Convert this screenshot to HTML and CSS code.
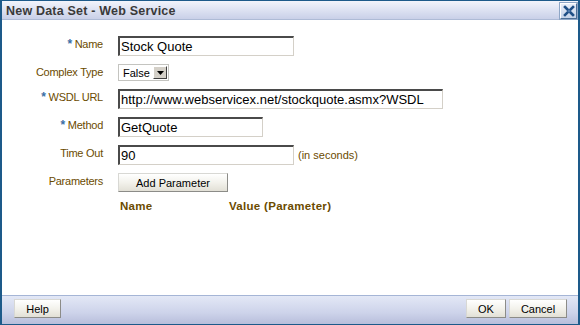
FILE: index.html
```html
<!DOCTYPE html>
<html>
<head>
<meta charset="utf-8">
<title>New Data Set - Web Service</title>
<link rel="stylesheet" href="styles.css">
</head>
<body>
<div class="dialog">
  <div class="titlebar">
    <span class="title">New Data Set - Web Service</span>
    <span class="close">
      <svg width="14" height="14" viewBox="0 0 14 14">
        <path d="M3 3 L11 11 M11 3 L3 11" stroke="#1f4f86" stroke-width="2.6" stroke-linecap="square"/>
        <path d="M7 5.5 L7 8.5 M5.5 7 L8.5 7" stroke="#5f86b8" stroke-width="1"/>
      </svg>
    </span>
  </div>
  <div class="content">
    <div class="form">
      <div class="lbl"><span class="req">*</span> Name</div>
      <div class="field"><div class="textbox w-name">Stock Quote</div></div>

      <div class="lbl">Complex Type</div>
      <div class="field">
        <div class="select">
          <span class="select-val">False</span>
          <span class="select-btn">
            <svg width="7" height="4" viewBox="0 0 7 4"><path d="M0 0 H7 L3.5 4 Z" fill="#000"/></svg>
          </span>
        </div>
      </div>

      <div class="lbl"><span class="req">*</span> WSDL URL</div>
      <div class="field"><div class="textbox w-url">http://www.webservicex.net/stockquote.asmx?WSDL</div></div>

      <div class="lbl"><span class="req">*</span> Method</div>
      <div class="field"><div class="textbox w-method">GetQuote</div></div>

      <div class="lbl">Time Out</div>
      <div class="field">
        <div class="textbox w-name">90</div>
        <span class="hint">(in seconds)</span>
      </div>

      <div class="lbl">Parameters</div>
      <div class="field"><span class="btn btn-add">Add Parameter</span></div>

      <div class="lbl"></div>
      <div class="field params-head">
        <span class="ph-name">Name</span>
        <span>Value (Parameter)</span>
      </div>
    </div>
  </div>
  <div class="footer">
    <span class="btn btn-help">Help</span>
    <div class="footer-right">
      <span class="btn btn-ok">OK</span>
      <span class="btn btn-cancel">Cancel</span>
    </div>
  </div>
</div>
</body>
</html>
```
FILE: styles.css
```css
html, body {
  margin: 0;
  padding: 0;
  background: #ffffff;
}

.dialog {
  box-sizing: border-box;
  width: 580px;
  height: 325px;
  display: flex;
  flex-direction: column;
  border-top: 1px solid #1d5a8a;
  border-left: 2px solid #1d5a8a;
  border-right: 2px solid #1d5a8a;
  border-bottom: 1px solid #1d5a8a;
  font-family: "Liberation Sans", Arial, sans-serif;
}

.titlebar {
  height: 18px;
  border-bottom: 1px solid #aebbd6;
  background: linear-gradient(#f2f4fb, #dfe4f3 45%, #c9d0e8);
  display: flex;
  align-items: center;
  justify-content: space-between;
  padding: 0 0 0 4px;
}

.title {
  font-size: 12.5px;
  font-weight: bold;
  color: #3a3a3a;
  letter-spacing: 0.2px;
  padding-top: 1px;
}

.close {
  box-sizing: border-box;
  width: 17px;
  height: 16px;
  margin-right: 1px;
  margin-top: 2px;
  display: flex;
  align-items: center;
  justify-content: center;
  border-top: 1px solid #ffffff;
  border-left: 1px solid #ffffff;
  border-right: 1px solid #4d6f96;
  border-bottom: 1px solid #4d6f96;
  background: linear-gradient(#e8eef8, #c4d2e8);
  box-shadow: 0 0 0 1px #8ea6c6;
}

.content {
  flex: 1;
  background: #ffffff;
}

.form {
  display: grid;
  grid-template-columns: 101px auto;
  column-gap: 15px;
  row-gap: 8px;
  padding-top: 16px;
}

.lbl {
  text-align: right;
  font-size: 11px;
  line-height: 13px;
  letter-spacing: -0.25px;
  padding-top: 2px;
  color: #6b4b00;
}

.req {
  color: #3b6ea5;
  font-weight: bold;
  font-size: 12px;
}

.field {
  display: flex;
  align-items: center;
  gap: 4px;
}

.textbox {
  box-sizing: border-box;
  height: 20px;
  border-top: 2px solid #4a4a4a;
  border-left: 2px solid #4a4a4a;
  border-right: 1px solid #d4d0c8;
  border-bottom: 1px solid #d4d0c8;
  padding: 0 0 0 1px;
  font-size: 13px;
  line-height: 17px;
  color: #000;
  background: #fff;
  white-space: nowrap;
}

.w-name { width: 176px; }
.w-url { width: 325px; }
.w-method { width: 145px; }

.hint {
  font-size: 11px;
  color: #6b4b00;
}

.select {
  box-sizing: border-box;
  height: 17px;
  width: 51px;
  display: flex;
  align-items: center;
  justify-content: space-between;
  border: 1px solid #c4c4c0;
  padding: 0 1px 0 4px;
  background: #fff;
}

.select-val {
  font-size: 11px;
  color: #000;
}

.select-btn {
  box-sizing: border-box;
  width: 14px;
  height: 13px;
  display: flex;
  align-items: center;
  justify-content: center;
  background: #d4d0c8;
  border-top: 1px solid #ffffff;
  border-left: 1px solid #ffffff;
  border-right: 1px solid #404040;
  border-bottom: 1px solid #404040;
}

.btn {
  box-sizing: border-box;
  display: inline-flex;
  align-items: center;
  justify-content: center;
  height: 19px;
  font-size: 11px;
  color: #000;
  background: linear-gradient(#ffffff, #f3f2ec 50%, #e2e0d6);
  border-top: 1px solid #d8d8d4;
  border-left: 1px solid #d8d8d4;
  border-right: 1px solid #8c8c88;
  border-bottom: 1px solid #8c8c88;
}

.btn-add { width: 110px; }

.params-head {
  font-size: 11.5px;
  font-weight: bold;
  color: #6b4b00;
  line-height: 12px;
  gap: 0;
  padding-left: 2px;
  letter-spacing: 0.3px;
}

.ph-name { width: 109px; }

.footer {
  height: 25px;
  border-top: 1px solid #a5b5d6;
  background: linear-gradient(#e3e8f6, #cdd3ea 60%, #b8bedb);
  display: flex;
  align-items: flex-start;
  justify-content: space-between;
  padding: 3px 11px 0 12px;
}

.footer-right {
  display: flex;
  gap: 3px;
}

.btn-help { width: 47px; }
.btn-ok { width: 40px; }
.btn-cancel { width: 58px; }
```
